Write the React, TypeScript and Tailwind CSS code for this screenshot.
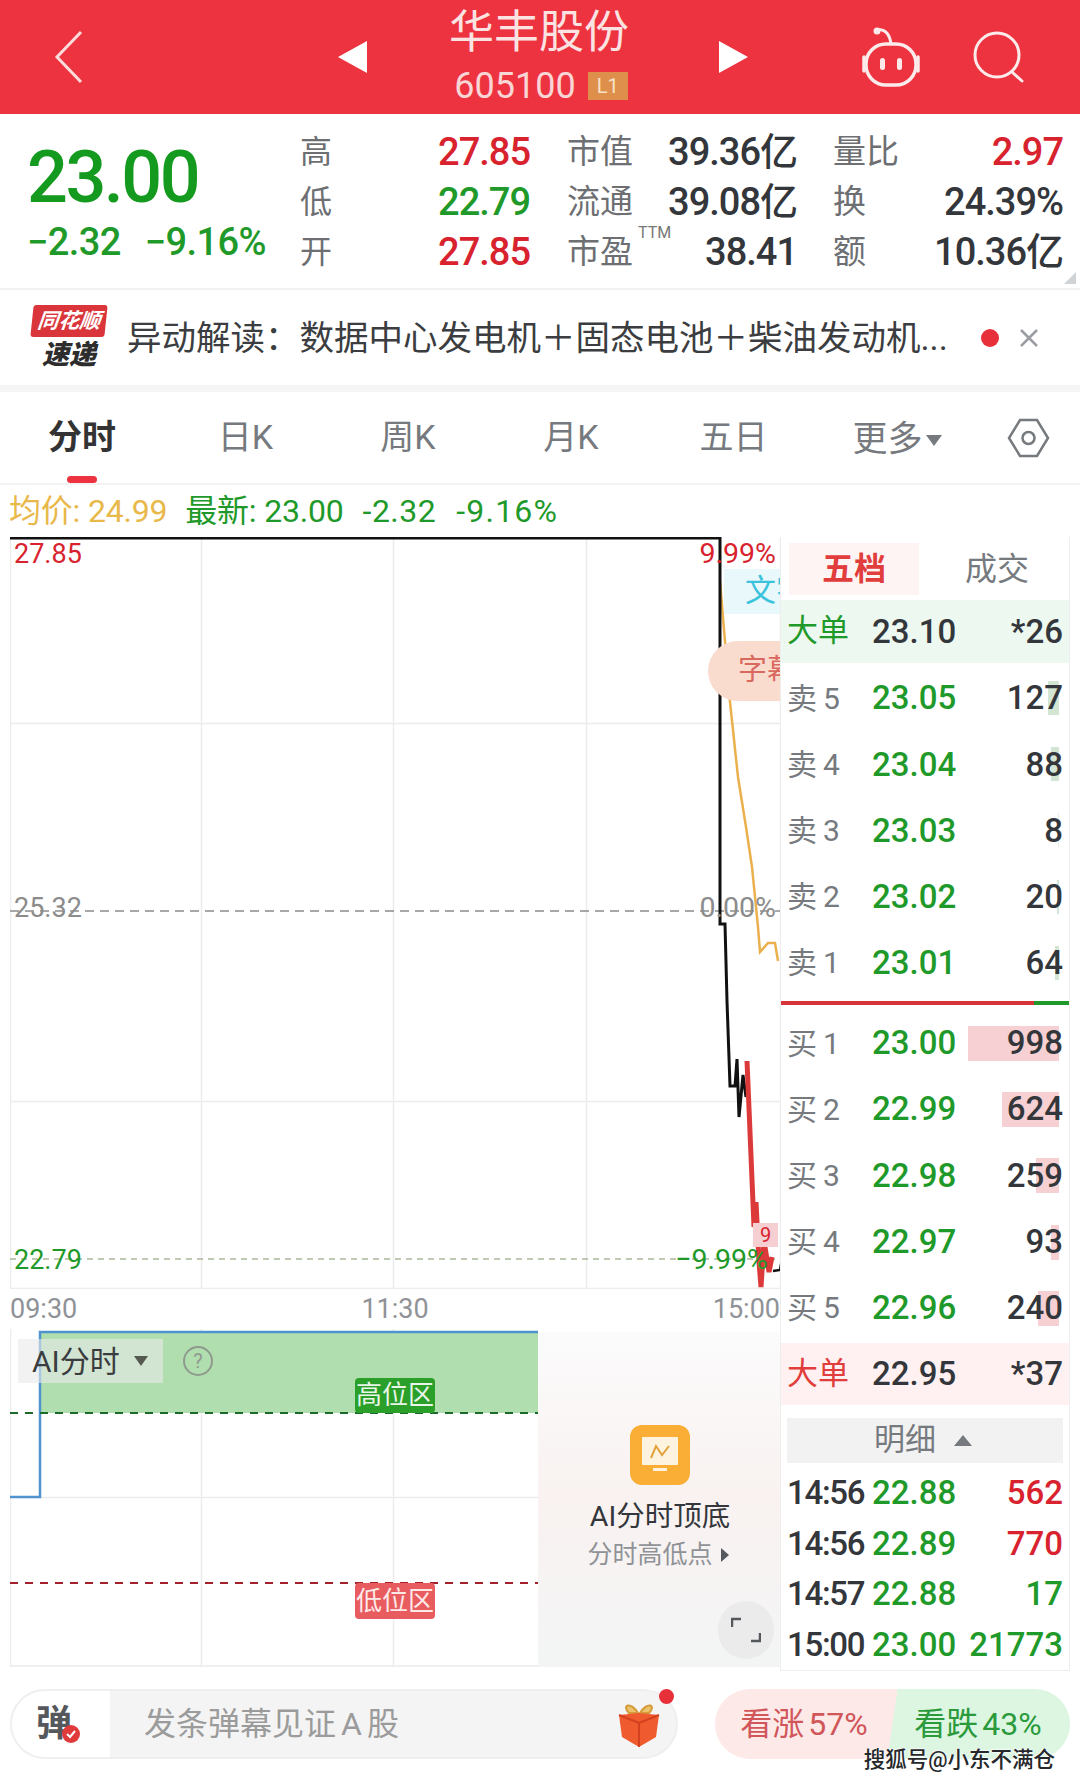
const sellRows = [
  { label: '卖', num: '5', price: '23.05', vol: '127', bar: 'w-[11px] bg-[#d3e5d3]' },
  { label: '卖', num: '4', price: '23.04', vol: '88', bar: 'w-[8px] bg-[#d3e5d3]' },
  { label: '卖', num: '3', price: '23.03', vol: '8', bar: 'w-[1px] bg-[#e3efe3]' },
  { label: '卖', num: '2', price: '23.02', vol: '20', bar: 'w-[2px] bg-[#d3e5d3]' },
  { label: '卖', num: '1', price: '23.01', vol: '64', bar: 'w-[4px] bg-[#d3e5d3]' },
];

const buyRows = [
  { label: '买', num: '1', price: '23.00', vol: '998', bar: 'w-[91px]' },
  { label: '买', num: '2', price: '22.99', vol: '624', bar: 'w-[57px]' },
  { label: '买', num: '3', price: '22.98', vol: '259', bar: 'w-[23px]' },
  { label: '买', num: '4', price: '22.97', vol: '93', bar: 'w-[8px]' },
  { label: '买', num: '5', price: '22.96', vol: '240', bar: 'w-[21px]' },
];

const trades = [
  { time: '14:56', price: '22.88', vol: '562', color: 'text-[#d8232f]' },
  { time: '14:56', price: '22.89', vol: '770', color: 'text-[#d8232f]' },
  { time: '14:57', price: '22.88', vol: '17', color: 'text-[#1f9a2a]' },
  { time: '15:00', price: '23.00', vol: '21773', color: 'text-[#1f9a2a]' },
];

const stats = [
  { a: '高', b: '27.85', bc: 'text-[#d8232f]', c: '市值', d: '39.36亿', e: '量比', f: '2.97', fc: 'text-[#d8232f]' },
  { a: '低', b: '22.79', bc: 'text-[#1f9a2a]', c: '流通', d: '39.08亿', e: '换', f: '24.39%', fc: 'text-[#33363a]' },
  { a: '开', b: '27.85', bc: 'text-[#d8232f]', c: '市盈', d: '38.41', e: '额', f: '10.36亿', fc: 'text-[#33363a]' },
];

const tabs = [
  { name: '分时', w: 'w-[164px]', active: true },
  { name: '日K', w: 'w-[163px]' },
  { name: '周K', w: 'w-[162px]' },
  { name: '月K', w: 'w-[164px]' },
  { name: '五日', w: 'w-[161px]' },
];

function Header() {
  return (
    <div className="flex h-[114px] items-center bg-[#ee3340] text-white">
      <svg className="ml-[54px] h-[54px] w-[30px]" viewBox="0 0 30 54" fill="none" stroke="#fbdcdc" strokeWidth="3">
        <path d="M27 2 L3 27 L27 52" />
      </svg>
      <svg className="ml-[254px] h-[32px] w-[29px]" viewBox="0 0 29 32" fill="white">
        <path d="M29 0 V32 L0 16 Z" />
      </svg>
      <div className="flex w-[352px] flex-col items-center">
        <div className="h-[58px] pr-[8px] text-[45px] leading-[50px] text-[#fbe3e3]">华丰股份</div>
        <div className="flex h-[40px] items-center gap-[12px] pr-[4px]">
          <span className="text-[36px] leading-[40px] text-[#f9d5d5]">605100</span>
          <span className="flex h-[28px] w-[40px] items-center justify-center bg-[#df8f4c] text-[20px] text-[#f8e3c8]">L1</span>
        </div>
      </div>
      <svg className="h-[32px] w-[29px]" viewBox="0 0 29 32" fill="white">
        <path d="M0 0 V32 L29 16 Z" />
      </svg>
      <svg className="ml-[112px] h-[60px] w-[62px]" viewBox="0 0 62 60" fill="none" stroke="#fdeaea">
        <path d="M19 2.5 C27 3 30 9 31 17" strokeWidth="3" />
        <circle cx="17" cy="4" r="3.5" fill="#fdeaea" stroke="none" />
        <rect x="6" y="17" width="50" height="41" rx="20" strokeWidth="3.5" />
        <path d="M4 30 V44 M58 30 V44" strokeWidth="3.5" strokeLinecap="round" />
        <rect x="20" y="31" width="5" height="12" rx="2.5" fill="#fdeaea" stroke="none" />
        <rect x="37" y="31" width="5" height="12" rx="2.5" fill="#fdeaea" stroke="none" />
      </svg>
      <svg className="ml-[51px] h-[52px] w-[52px]" viewBox="0 0 52 52" fill="none" stroke="#fdeaea" strokeWidth="3">
        <circle cx="24" cy="24" r="22" />
        <path d="M39 41 L49 50" strokeLinecap="round" />
      </svg>
    </div>
  );
}

function StatsRow() {
  return (
    <div className="relative flex h-[176px] border-b-2 border-[#f1f1f1]">
      <div className="w-[300px] pl-[27px]">
        <div className="mt-[26px] h-[76px] text-[72px] leading-[76px] font-medium tracking-[-2.5px] text-[#149a1e]">23.00</div>
        <div className="mt-[4px] flex gap-[24px] text-[38px] leading-[44px] font-medium tracking-[-0.6px] text-[#1f9a2a]">
          <span>−2.32</span>
          <span>−9.16%</span>
        </div>
      </div>
      <div className="mt-[13px] flex flex-col">
        {stats.map((s) => (
          <div key={s.a} className="flex h-[50px] items-center">
            <span className="w-[60px] text-[32px] text-[#6d6f73]">{s.a}</span>
            <span className={`w-[170px] text-right text-[38px] font-medium tracking-[-1px] ${s.bc}`}>{s.b}</span>
            <span className="relative ml-[37px] w-[66px] text-[33px] text-[#6d6f73]">
              {s.c}
              {s.c === '市盈' && <span className="absolute top-[-2px] left-[71px] text-[16px] leading-[16px] text-[#777]">TTM</span>}
            </span>
            <span className="w-[164px] text-right text-[38px] font-medium tracking-[-1px] text-[#33363a]">{s.d}</span>
            <span className="ml-[36px] w-[66px] text-[33px] text-[#6d6f73]">{s.e}</span>
            <span className={`w-[164px] text-right text-[38px] font-medium tracking-[-1px] ${s.fc}`}>{s.f}</span>
          </div>
        ))}
      </div>
      <div className="absolute right-[4px] bottom-[4px] h-0 w-0 border-b-[12px] border-l-[12px] border-b-[#cfd3d6] border-l-transparent" />
    </div>
  );
}

function NewsRow() {
  return (
    <div className="flex h-[102px] items-center border-b-[7px] border-[#f5f5f5]">
      <div className="ml-[32px] flex w-[74px] flex-col items-center">
        <div className="flex h-[32px] w-[74px] -skew-x-6 items-center justify-center rounded-[3px] bg-[#d9353b] text-[21px] leading-none font-bold text-white italic">
          同花顺
        </div>
        <div className="mt-[3px] text-[27px] leading-[30px] font-black text-[#2d2d2d] italic">速递</div>
      </div>
      <div className="ml-[21px] w-[833px] whitespace-nowrap text-[34.5px] leading-[40px] text-[#3b3d40]">
        异动解读：数据中心发电机＋固态电池＋柴油发动机...
      </div>
      <div className="ml-[21px] h-[18px] w-[18px] rounded-full bg-[#e8303a]" />
      <svg className="ml-[20px] h-[20px] w-[20px]" viewBox="0 0 20 20" stroke="#9a9ea3" strokeWidth="2.5">
        <path d="M2 2 L18 18 M18 2 L2 18" />
      </svg>
    </div>
  );
}

function TabsRow() {
  return (
    <div className="flex h-[93px] items-center border-b-2 border-[#f3f3f3]">
      {tabs.map((t) => (
        <div key={t.name} className={`relative flex h-full items-center justify-center text-[34px] ${t.w} ${t.active ? 'font-bold text-[#333]' : 'text-[#767a7e]'}`}>
          {t.name}
          {t.active && <div className="absolute bottom-[0px] h-[7px] w-[30px] rounded-full bg-[#ee3340]" />}
        </div>
      ))}
      <div className="flex h-full w-[166px] items-center justify-center gap-[3px] pt-[5px] text-[35px] text-[#767a7e]">
        更多
        <span className="h-0 w-0 border-x-[8px] border-t-[11px] border-x-transparent border-t-[#767a7e]" />
      </div>
      <svg className="ml-[27px] h-[40px] w-[43px]" viewBox="0 0 43 40" fill="none" stroke="#767a7e" strokeWidth="2.5">
        <path d="M13 2 H30 L41 20 L30 38 H13 L2 20 Z" />
        <circle cx="21.5" cy="20" r="6" />
      </svg>
    </div>
  );
}

function InfoLine() {
  return (
    <div className="flex h-[52px] items-center whitespace-nowrap pl-[9px] text-[32px] tracking-[-0.2px]">
      <span className="text-[#e8b84a]">均价: 24.99</span>
      <span className="ml-[18px] text-[#1f9a2a]">最新: 23.00</span>
      <span className="ml-[19px] tracking-[0.5px] text-[#1f9a2a]">-2.32</span>
      <span className="ml-[20px] tracking-[1.2px] text-[#1f9a2a]">-9.16%</span>
    </div>
  );
}

function PriceChart() {
  return (
    <div className="relative h-[752px] w-[772px] overflow-hidden">
      <svg className="h-[752px] w-[772px]" viewBox="0 0 772 752" fill="none">
        <path d="M0.5 0 V752 M191.5 0 V752 M383.5 0 V752 M576.5 0 V752 M770.5 0 V752 M0 186.5 H772 M0 564.5 H772 M0 751.5 H772" stroke="#ececec" strokeWidth="1.5" />
        <path d="M0 374 H772" stroke="#8c8c8c" strokeWidth="1.5" strokeDasharray="9 6" />
        <path d="M0 722 H772" stroke="#a9b99a" strokeWidth="1.5" strokeDasharray="6 5" />
        <path d="M710 44 L720 165 L728 240 L736 290 L742 330 L748 390 L750 415 L758 406 L765 406 L768 424" stroke="#eab04e" strokeWidth="2.5" />
        <path d="M0 1 H710 V387 L715 387 L717 464 L720 549 L725 549 L727 522 L729 580 L733 538 L736 560" stroke="#111" strokeWidth="3" />
        <path d="M737 524 L744 690 L746 665 L749 725 L751 750 L754 704 L759 735 L762 720" stroke="#dc3a3a" strokeWidth="5" />
        <path d="M763 734 L770 733 L772 722" stroke="#111" strokeWidth="2.5" />
      </svg>
      <span className="absolute top-[0px] left-[4px] text-[27px] leading-[34px] text-[#d8232f]">27.85</span>
      <span className="absolute top-[0px] right-[6px] text-[28.5px] leading-[34px] text-[#d8232f]">9.99%</span>
      <span className="absolute top-[354px] left-[4px] text-[27px] leading-[34px] text-[#8c8c8c]">25.32</span>
      <span className="absolute top-[354px] right-[6px] text-[28.5px] leading-[34px] text-[#8c8c8c]">0.00%</span>
      <span className="absolute top-[706px] left-[4px] text-[27px] leading-[34px] text-[#1f9a2a]">22.79</span>
      <span className="absolute top-[706px] right-[14px] text-[28.5px] leading-[34px] text-[#1f9a2a]">−9.99%</span>
      <div className="absolute top-[32px] left-[714px] flex h-[45px] w-[58px] items-center overflow-hidden whitespace-nowrap bg-[#e9f8fb] pl-[21px] text-[31px] text-[#3cc3dc]">
        文字
      </div>
      <div className="absolute top-[104px] left-[698px] flex h-[60px] w-[80px] items-center overflow-hidden whitespace-nowrap rounded-l-full bg-[#fadccf] pl-[30px] text-[29px] text-[#d9685f]">
        字幕
      </div>
      <div className="absolute top-[686px] left-[743px] flex h-[24px] w-[25px] justify-center bg-[#f6cfd2] text-[20px] leading-[24px] text-[#d8232f]">9</div>
    </div>
  );
}

function TimeAxis() {
  return (
    <div className="flex h-[40px] w-[772px] items-center justify-between pr-[2px] text-[27px] text-[#8f9296]">
      <span>09:30</span>
      <span>11:30</span>
      <span>15:00</span>
    </div>
  );
}

function AiChart() {
  return (
    <div className="relative h-[338px] w-[772px] overflow-hidden">
      <svg className="h-[338px] w-[772px]" viewBox="0 0 772 338" fill="none">
        <path d="M0.5 0 V338 M191.5 0 V338 M383.5 0 V338 M0 168.5 H772 M0 337 H772" stroke="#ececec" strokeWidth="1.5" />
        <rect x="31" y="2" width="497" height="82" fill="#b0deae" />
        <path d="M0 168 H30 V3 H528" stroke="#4f93cf" strokeWidth="2.5" />
        <path d="M0 84 H528" stroke="#1d6b2a" strokeWidth="2" strokeDasharray="8 7" />
        <path d="M0 254 H528" stroke="#a3202c" strokeWidth="2" strokeDasharray="8 7" />
      </svg>
      <div className="absolute top-[10px] left-[8px] flex h-[44px] w-[145px] items-center gap-[14px] bg-[#e9e9e9]/60 pl-[14px] text-[30px] text-[#3a3c3f]">
        AI分时
        <span className="h-0 w-0 border-x-[7px] border-t-[10px] border-x-transparent border-t-[#55594f]" />
      </div>
      <div className="absolute top-[17px] left-[173px] flex h-[30px] w-[30px] items-center justify-center rounded-full border-2 border-[#8f9a8f] text-[20px] text-[#8f9a8f]">?</div>
      <div className="absolute top-[49px] left-[345px] flex h-[35px] w-[80px] items-center justify-center rounded-[4px] bg-[#2aa02a] text-[26px] text-[#e8f5e8]">高位区</div>
      <div className="absolute top-[254px] left-[345px] flex h-[36px] w-[80px] items-center justify-center rounded-[4px] bg-[#e85c5f] text-[26px] text-[#fde8e8]">低位区</div>
      <div className="absolute top-[3px] left-[528px] flex h-[335px] w-[244px] flex-col items-center bg-gradient-to-b from-[#fbfbfb] via-[#f9f2f1] to-[#f3f5f5]">
        <div className="mt-[93px] flex h-[60px] w-[60px] items-center justify-center rounded-[12px] bg-[#fbae36]">
          <svg className="h-[38px] w-[38px]" viewBox="0 0 38 38" fill="none">
            <rect x="1" y="1" width="36" height="28" rx="1" fill="#fdf3df" />
            <path d="M10 22 L15 10 L21 19 L28 10" stroke="#e2a23c" strokeWidth="2" />
            <rect x="12" y="32" width="14" height="3" fill="#fdf3df" />
          </svg>
        </div>
        <div className="mt-[14px] text-[28.5px] leading-[36px] text-[#33363a]">AI分时顶底</div>
        <div className="mt-[4px] mr-[4px] flex items-center gap-[8px] text-[25px] leading-[32px] text-[#8f9296]">
          分时高低点
          <span className="h-0 w-0 border-y-[7px] border-l-[8px] border-y-transparent border-l-[#55595e]" />
        </div>
      </div>
      <div className="absolute top-[272px] left-[708px] flex h-[58px] w-[56px] items-center justify-center rounded-full bg-[#ebebeb]">
        <svg className="h-[26px] w-[30px]" viewBox="0 0 30 26" fill="none" stroke="#55595e" strokeWidth="2.5">
          <path d="M1 10 V2 H10 M29 16 V24 H20" />
        </svg>
      </div>
    </div>
  );
}

function OrderBook() {
  return (
    <div className="relative z-10 ml-[-2px] flex w-[290px] flex-col border-x border-b border-[#eeeeee] bg-white">
      <div className="flex h-[63px] items-center text-[32px]">
        <div className="ml-[8px] flex h-[52px] w-[130px] items-center justify-center bg-[#fff4f4] font-bold text-[#e23d3d]">五档</div>
        <div className="ml-[16px] w-[124px] text-center text-[#767a7e]">成交</div>
      </div>
      <div className="mb-[2px] flex h-[63px] items-center bg-[#edf8f0] pr-[6px] pl-[6px] text-[33px] font-medium text-[#33363a]">
        <span className="w-[85px] text-[31px] font-normal text-[#1f9a2a]">大单</span>
        <span className="w-[100px]">23.10</span>
        <span className="flex-1 text-right">*26</span>
      </div>
      {sellRows.map((r) => (
        <div key={r.num} className="relative flex h-[66.2px] items-center pr-[6px] pl-[6px] text-[33px] font-medium">
          <span className="flex w-[85px] items-center gap-[6px] text-[30px] font-normal text-[#767a7e]">
            {r.label}
            <span>{r.num}</span>
          </span>
          <span className="w-[100px] text-[#1f9a2a]">{r.price}</span>
          <span className="relative z-10 flex-1 text-right text-[#33363a]">{r.vol}</span>
          <div className={`absolute top-[16px] right-[10px] h-[34px] ${r.bar}`} />
        </div>
      ))}
      <div className="mt-[5px] flex h-[4px]">
        <div className="w-[253px] bg-[#d8333a]" />
        <div className="flex-1 bg-[#1f9a2a]" />
      </div>
      <div className="h-[5px]" />
      {buyRows.map((r) => (
        <div key={r.num} className="relative flex h-[66.2px] items-center pr-[6px] pl-[6px] text-[33px] font-medium">
          <span className="flex w-[85px] items-center gap-[6px] text-[30px] font-normal text-[#767a7e]">
            {r.label}
            <span>{r.num}</span>
          </span>
          <span className="w-[100px] text-[#1f9a2a]">{r.price}</span>
          <span className="relative z-10 flex-1 text-right text-[#33363a]">{r.vol}</span>
          <div className={`absolute top-[16px] right-[10px] h-[35px] bg-[#f6d0d3] ${r.bar}`} />
        </div>
      ))}
      <div className="mt-[2px] flex h-[62px] items-center bg-[#fff1f1] pr-[6px] pl-[6px] text-[33px] font-medium text-[#33363a]">
        <span className="w-[85px] text-[31px] font-normal text-[#e23d3d]">大单</span>
        <span className="w-[100px]">22.95</span>
        <span className="flex-1 text-right">*37</span>
      </div>
      <div className="mx-[6px] mt-[13px] flex h-[45px] items-center bg-[#f2f2f2] pl-[87px] text-[31px] text-[#767a7e]">
        明细
        <span className="ml-[18px] h-0 w-0 border-x-[9px] border-b-[11px] border-x-transparent border-b-[#767a7e]" />
      </div>
      <div className="mt-[5px] flex flex-col">
        {trades.map((t) => (
          <div key={t.time + t.price} className="flex h-[50.5px] items-center pr-[6px] pl-[6px] text-[33px] font-medium">
            <span className="w-[85px] tracking-[-1.3px] text-[#33363a]">{t.time}</span>
            <span className="w-[90px] text-[#1f9a2a]">{t.price}</span>
            <span className={`flex-1 text-right ${t.color}`}>{t.vol}</span>
          </div>
        ))}
      </div>
    </div>
  );
}

function BottomBar() {
  return (
    <div className="relative mt-[18px] flex h-[70px] pl-[10px]">
      <div className="flex h-[70px] w-[668px] items-center overflow-hidden rounded-full border-2 border-[#efefef] bg-[#f4f4f4]">
        <div className="relative flex h-full w-[98px] items-center bg-white pl-[24px] text-[36px] font-bold text-[#55585c]">
          弹
          <div className="absolute top-[34px] left-[50px] flex h-[18px] w-[18px] items-center justify-center rounded-full bg-[#e03a3a]">
            <svg className="h-[10px] w-[10px]" viewBox="0 0 10 10" fill="none" stroke="white" strokeWidth="2">
              <path d="M1 5 L4 8 L9 2" />
            </svg>
          </div>
        </div>
        <div className="ml-[34px] flex text-[32px] text-[#9b9b9b]">
          发条弹幕见证
          <span className="mx-[5px]">A</span>
          股
        </div>
      </div>
      <svg className="absolute top-[14px] left-[617px] h-[44px] w-[44px]" viewBox="0 0 44 44">
        <path d="M21 10 C14 -2 4 2 12 10 Z M23 10 C30 -2 40 2 32 10 Z" fill="#e9c26a" stroke="#d69a3a" strokeWidth="2" />
        <path d="M2 12 L22 10 L42 12 L39 34 L22 44 L5 34 Z" fill="#ef5a2f" />
        <path d="M2 12 L22 20 L42 12 M22 20 V44" fill="none" stroke="#d2401f" strokeWidth="2" />
      </svg>
      <div className="absolute top-[0px] left-[659px] h-[15px] w-[15px] rounded-full bg-[#e8303a]" />
      <div className="ml-[37px] flex h-[70px] w-[355px] overflow-hidden rounded-full bg-[linear-gradient(98deg,#fde9e8_50%,#dcf6e2_50%)]">
        <div className="flex w-[178px] items-center justify-center gap-[4px] text-[32px] text-[#d0565a]">
          看涨<span>57%</span>
        </div>
        <div className="flex w-[170px] items-center justify-center gap-[4px] text-[32px] text-[#2b9a3b]">
          看跌<span>43%</span>
        </div>
      </div>
      <div className="absolute top-[56px] right-[25px] z-10 whitespace-nowrap text-[21.5px] leading-[30px] font-medium text-[#26282b] [text-shadow:0_0_2px_#fff,0_0_2px_#fff,0_0_2px_#fff]">
        搜狐号@小东不满仓
      </div>
    </div>
  );
}

export default function App() {
  return (
    <div className="h-[1786px] w-[1080px] overflow-hidden bg-white font-['Roboto','Noto_Sans_CJK_SC',sans-serif]">
      <Header />
      <StatsRow />
      <NewsRow />
      <TabsRow />
      <InfoLine />
      <div className="flex pl-[10px]">
        <div className="flex w-[772px] flex-col">
          <PriceChart />
          <TimeAxis />
          <AiChart />
        </div>
        <OrderBook />
      </div>
      <BottomBar />
    </div>
  );
}
